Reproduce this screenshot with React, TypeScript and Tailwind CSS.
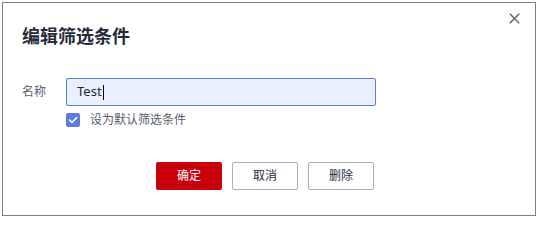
import React from "react";

export default function App() {
  const font = { fontFamily: '"Noto Sans", "Noto Sans CJK SC", sans-serif' };
  return (
    <div className="w-[538px] h-[217px] bg-white" style={font}>
      <div className="relative ml-[2px] mt-[2px] w-[534px] h-[214px] border border-[#7f7f7f] bg-white">
        <button className="absolute right-[15px] top-[10px] w-[11px] h-[11px] flex items-center justify-center">
          <svg width="11" height="11" viewBox="0 0 11 11" fill="none">
            <path d="M0.8 0.8 L10.2 10.2 M10.2 0.8 L0.8 10.2" stroke="#575d6c" strokeWidth="1.3" />
          </svg>
        </button>
        <div className="pt-[21px] pl-[19px] text-[18px] leading-[24px] font-bold text-[#252b3a]">
          编辑筛选条件
        </div>
        <div className="mt-[30px] pl-[19px]">
          <div className="flex items-center">
            <div className="w-[44px] text-[12px] text-[#575d6c] leading-[16px]">名称</div>
            <div className="w-[310px] h-[28px] border border-[#5e7ce0] bg-[#e9effc] rounded-[2px] flex items-center pl-[10px] text-[13px] text-[#252b3a]">
              <span>Test</span>
              <span className="w-[1px] h-[15px] bg-black ml-[1px]"></span>
            </div>
          </div>
          <div className="flex items-center mt-[6px] ml-[44px]">
            <div className="w-[14px] h-[14px] rounded-[2px] bg-[#5e7ce0] flex items-center justify-center">
              <svg width="10" height="10" viewBox="0 0 10 10" fill="none">
                <path d="M1.5 5 L4 7.5 L8.7 2.6" stroke="white" strokeWidth="1.6" strokeLinecap="round" strokeLinejoin="round" />
              </svg>
            </div>
            <span className="ml-[10px] text-[12px] leading-[16px] text-[#575d6c]">设为默认筛选条件</span>
          </div>
        </div>
        <div className="mt-[34px] flex pl-[153px] gap-[10px]">
          <button className="w-[66px] h-[28px] rounded-[2px] bg-[#c7000b] text-white text-[12px]">确定</button>
          <button className="w-[66px] h-[28px] rounded-[2px] border border-[#adb0b8] bg-white text-[#252b3a] text-[12px]">取消</button>
          <button className="w-[66px] h-[28px] rounded-[2px] border border-[#adb0b8] bg-white text-[#252b3a] text-[12px]">删除</button>
        </div>
      </div>
    </div>
  );
}
